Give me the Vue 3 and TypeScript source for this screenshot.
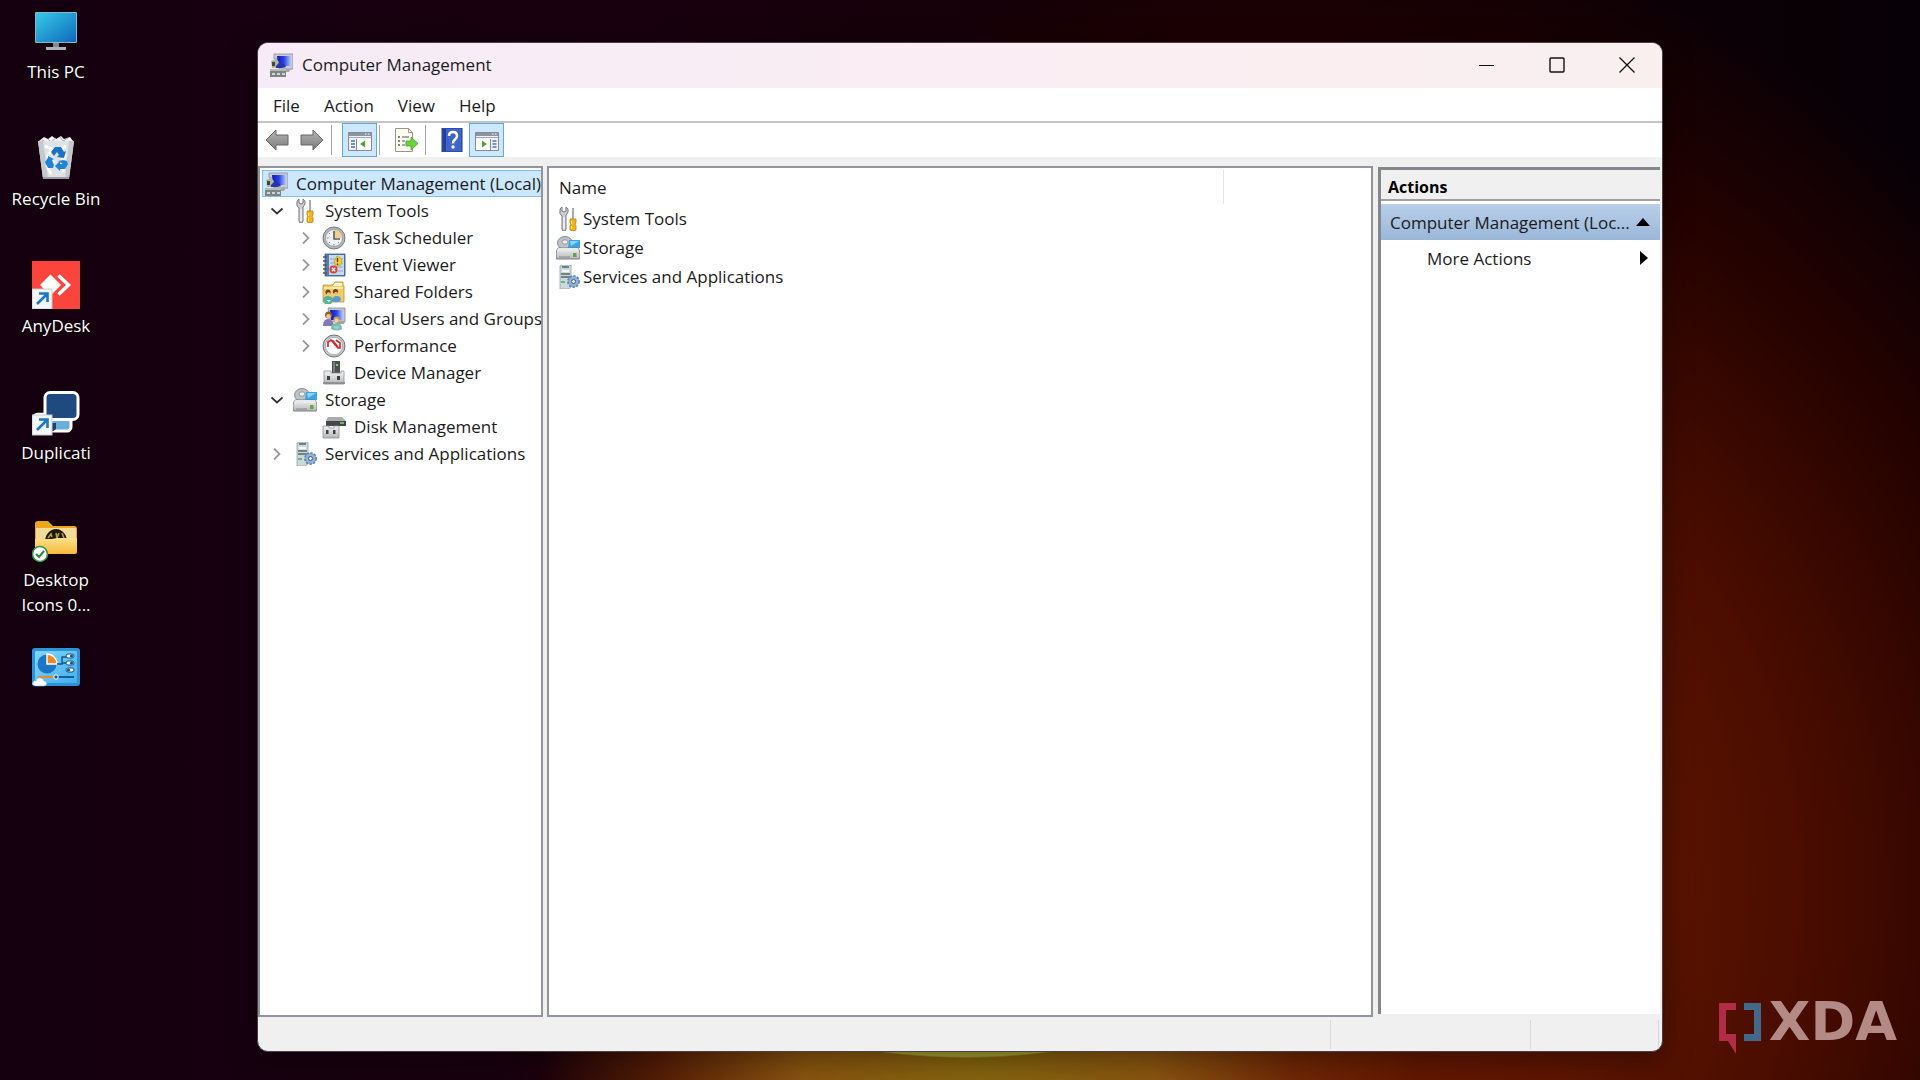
<script setup lang="ts">
import { ref } from 'vue'

interface TreeRow {
  label: string
  icon: string
  level: number
  state?: 'open' | 'closed'
}

const desktopItems = [
  { label: 'This PC', icon: 'pc' },
  { label: 'Recycle Bin', icon: 'bin' },
  { label: 'AnyDesk', icon: 'anydesk' },
  { label: 'Duplicati', icon: 'duplicati' },
  { label: 'Desktop Icons 0...', icon: 'folder' },
  { label: '', icon: 'control' },
]

const menus = ['File', 'Action', 'View', 'Help']

const tree: TreeRow[] = [
  { label: 'Computer Management (Local)', icon: 'computer', level: 0 },
  { label: 'System Tools', icon: 'tools', level: 1, state: 'open' },
  { label: 'Task Scheduler', icon: 'clock', level: 2, state: 'closed' },
  { label: 'Event Viewer', icon: 'event', level: 2, state: 'closed' },
  { label: 'Shared Folders', icon: 'shared', level: 2, state: 'closed' },
  { label: 'Local Users and Groups', icon: 'users', level: 2, state: 'closed' },
  { label: 'Performance', icon: 'perf', level: 2, state: 'closed' },
  { label: 'Device Manager', icon: 'device', level: 2 },
  { label: 'Storage', icon: 'storage', level: 1, state: 'open' },
  { label: 'Disk Management', icon: 'disk', level: 2 },
  { label: 'Services and Applications', icon: 'services', level: 1, state: 'closed' },
]

const listRows = [
  { label: 'System Tools', icon: 'tools' },
  { label: 'Storage', icon: 'storage' },
  { label: 'Services and Applications', icon: 'services' },
]

const selected = ref(0)
</script>

<template>
  <div class="desktop">
    <svg class="sprite" aria-hidden="true">
      <defs>
        <linearGradient id="g-screen" x1="0" y1="0" x2="1" y2="1">
          <stop offset="0" stop-color="#35cbe6" /><stop offset="1" stop-color="#0f68bd" />
        </linearGradient>
        <linearGradient id="g-blue" x1="0" y1="0" x2="1" y2="0">
          <stop offset="0" stop-color="#1018b0" /><stop offset=".5" stop-color="#2a45e0" /><stop offset="1" stop-color="#b7c8ff" />
        </linearGradient>
        <linearGradient id="g-folder" x1="0" y1="0" x2="0" y2="1">
          <stop offset="0" stop-color="#ffe08a" /><stop offset="1" stop-color="#f6b93c" />
        </linearGradient>
        <linearGradient id="g-panel" x1="0" y1="0" x2="1" y2="1">
          <stop offset="0" stop-color="#7fd6fb" /><stop offset="1" stop-color="#49aeea" />
        </linearGradient>
        <linearGradient id="g-arrow" x1="0" y1="0" x2="0" y2="1">
          <stop offset="0" stop-color="#b5b5b5" /><stop offset="1" stop-color="#7c7c7c" />
        </linearGradient>
        <linearGradient id="g-metal" x1="0" y1="0" x2="0" y2="1">
          <stop offset="0" stop-color="#f4f4f4" /><stop offset="1" stop-color="#b4b6b8" />
        </linearGradient>
      </defs>

      <symbol id="i-pc" viewBox="0 0 48 48">
        <rect x="3" y="5" width="42" height="31" rx="1" fill="#8fb4c6" />
        <rect x="4" y="6" width="40" height="29" fill="url(#g-screen)" />
        <path d="M21 36h6v4h-6z" fill="#7f8b93" />
        <path d="M14 40h20v3H14z" fill="#a9b3b9" />
      </symbol>
      <symbol id="i-bin" viewBox="0 0 48 48">
        <path d="M7 7l5-4 4 2 4-3 4 3 5-3 3 3 6-2 3 4-2 6H9z" fill="#f1f1f1" />
        <path d="M16 5l3 3 5-4M28 3l3 4 5-3M10 6l4 2" fill="none" stroke="#a5a8aa" stroke-width="1" />
        <path d="M6 7l36 0-5 38H11z" fill="#dfe3e6" />
        <path d="M6 7h5l5 37h-5zM42 7h-5l-4 37h4z" fill="#c4c9cd" />
        <path d="M13 12l7 3-4 7 5 6-6 4 4 8M34 12l-6 4 5 6-5 8 4 8" fill="none" stroke="#f9fafb" stroke-width="3" />
        <path d="M11 43h26v2H11z" fill="#999fa4" />
        <path d="M19 18l4-5h6l3 5 2-1-2 7-7-1 2-2-2-3-3 4z" fill="#1673c5" />
        <path d="M16 22l6 3-2 1 2 5-1 3h-5l-3-6 3-4zM26 27l5-1 4 1 1 3-3 5h-5v2l-5-5 5-5v3h3z" fill="#1f83d8" />
      </symbol>
      <symbol id="i-anydesk" viewBox="0 0 48 48">
        <rect width="48" height="48" fill="#fb443b" />
        <path d="M8 24l10.500-10.500L29 24 18.500 34.500z" fill="#fff" />
        <path d="M26.500 14.500L36.500 24l-10 9.500" fill="none" stroke="#fff" stroke-width="3.500" />
        <rect x="0" y="28" width="20" height="20" fill="#f4f6f8" stroke="#c7cbd0" />
        <path d="M5 43L15 33M7 32.500h8.500V41" fill="none" stroke="#1a78c8" stroke-width="2.600" />
      </symbol>
      <symbol id="i-duplicati" viewBox="0 -3 48 48">
        <rect x="1.500" y="23" width="22" height="17" rx="4" fill="#1f3f66" stroke="#fff" stroke-width="2.500" />
        <rect x="18" y="22" width="21" height="18" rx="4" fill="#6aaedb" stroke="#fff" stroke-width="3" />
        <rect x="13" y="1.500" width="33" height="27" rx="5" fill="#1f4a80" stroke="#fff" stroke-width="3" />
        <path d="M18 32h6v6q-3 3-6 3z" fill="#1f3f66" />
        <rect x="0" y="24" width="20" height="20" fill="#f4f6f8" stroke="#c7cbd0" />
        <path d="M5 39L15 29M7 28.500h8.500V37" fill="none" stroke="#1a78c8" stroke-width="2.600" />
      </symbol>
      <symbol id="i-folder" viewBox="0 0 48 48">
        <path d="M3 9q0-3 3-3h10l5 5h21q3 0 3 3v20H3z" fill="#eda51d" />
        <path d="M4 13h40v18H4z" fill="#f3dc9a" />
        <path d="M13 27a11 13 0 0 1 22 0z" fill="#1c1a0d" />
        <path d="M16 23l3-4 1 3M24 18l1 5 2-5M30 18l2 5" fill="none" stroke="#b79c3a" stroke-width="1.600" />
        <path d="M3 24h17l5-1h20v14q0 2-2 2H5q-2 0-2-2z" fill="url(#g-folder)" />
        <circle cx="8" cy="39" r="7.500" fill="#fff" stroke="#33964b" stroke-width="1.600" />
        <path d="M4 39l3 3 5-6" fill="none" stroke="#26873e" stroke-width="2" />
      </symbol>
      <symbol id="i-control" viewBox="0 -1 48 48">
        <rect x="0" y="5" width="48" height="38" rx="3" fill="#2c93d8" />
        <rect x="3" y="8" width="42" height="32" rx="1" fill="url(#g-panel)" />
        <circle cx="15" cy="21" r="9.500" fill="#1d76c5" />
        <path d="M15 21V11a10 10 0 0 1 10 10z" fill="#e98a24" stroke="#fff" stroke-width="1.400" />
        <path d="M25 21h5v-7h5M30 20h4" fill="none" stroke="#0f548f" stroke-width="1.400" />
        <rect x="34" y="11" width="8" height="4" rx="2" fill="#fff" stroke="#0f548f" />
        <rect x="34" y="18" width="8" height="4" rx="2" fill="#fff" stroke="#0f548f" />
        <rect x="34" y="25" width="8" height="4" rx="2" fill="#fff" stroke="#0f548f" />
        <circle cx="39.500" cy="13" r="1.600" fill="#0f548f" /><circle cx="39.500" cy="20" r="1.600" fill="#0f548f" /><circle cx="36.500" cy="27" r="1.600" fill="#0f548f" />
        <path d="M6 34h16" stroke="#e98a24" stroke-width="2" /><path d="M26 34h16" stroke="#0f5fa6" stroke-width="2" />
        <circle cx="24" cy="34" r="2.200" fill="#0f5fa6" stroke="#fff" />
        <path d="M3 43q-4-1-2-4 1-2 3-1 1-4 5-3 3 1 3 3 3 0 3 3-1 2-3 2z" fill="#fff" stroke="#5bb1e6" stroke-width=".6" />
      </symbol>

      <symbol id="i-computer" viewBox="0 0 24 24">
        <path d="M5 1h19v15H10V6H5z" fill="#c9ccd2" stroke="#8b9096" stroke-width=".8" />
        <path d="M8 3h14v10H9z" fill="url(#g-blue)" />
        <path d="M2 8l5-2 3 3-1 6H3z" fill="#aeb3a2" />
        <path d="M3 9h3v4H3z" fill="#3c4a34" />
        <path d="M7 13l3-3 5 1 2 3-4 1H7z" fill="#2534a8" />
        <path d="M13 16h9l-2 3h-6z" fill="#a5a8aa" />
        <path d="M1 16h16v8H1z" fill="#7d8484" />
        <path d="M1 16h16v2H1z" fill="#b4baba" />
        <path d="M3 20h3v2H3zM8 20h3v2H8zM13 20h3v2h-3z" fill="#cfd4d4" />
      </symbol>
      <symbol id="i-tools" viewBox="0 0 24 24">
        <path d="M4 3q0-2 2-3v4l2 1 2-1V0q3 2 2 5-1 2-2 3v14q0 2-2 2t-2-2V9Q3 7 4 3z" fill="#cdd0d2" stroke="#74787b" />
        <path d="M8 10v12" stroke="#f6f6f6" stroke-width="1.500" />
        <path d="M16 1h2v12h-2z" fill="#a8abad" />
        <path d="M14 12h6v4l-1 1 1 2v4q-3 2-6 0v-4l1-2-1-1z" fill="#f3b61b" stroke="#b9800d" stroke-width=".8" />
        <path d="M15.500 14v3M15.500 19v3" stroke="#ffe184" />
      </symbol>
      <symbol id="i-clock" viewBox="0 0 24 24">
        <circle cx="12" cy="12" r="11" fill="#b4b8bb" stroke="#75797c" />
        <circle cx="12" cy="12" r="8.500" fill="#edf3f8" stroke="#8e9499" stroke-width=".8" />
        <path d="M12 12V4a8 8 0 0 1 8 8z" fill="#f2cf91" />
        <path d="M12 5v8h6" fill="none" stroke="#5c6062" stroke-width="1.600" />
        <path d="M12 18v1.500M5 12h1.500M7 7l1 1M7 17l1-1M17 17l-1-1" stroke="#7f888f" />
      </symbol>
      <symbol id="i-event" viewBox="0 0 24 24">
        <path d="M3 1h20v22H3z" fill="#557db0" stroke="#31588c" stroke-width=".8" />
        <path d="M7 2h15v20H7z" fill="#c8d9ec" />
        <path d="M8 6h13M8 10h13M8 14h13M8 18h13" stroke="#8eabc9" />
        <path d="M1 4h4M1 8h4M1 12h4M1 16h4M1 20h4" stroke="#50575d" stroke-width="1.400" />
        <path d="M15 3l5 3-1 6-5 1-2-4z" fill="#f3cf33" stroke="#b59412" stroke-width=".6" />
        <path d="M15.500 5v4M15.500 10.500v1.500" stroke="#574404" stroke-width="1.400" />
        <circle cx="11.500" cy="16.500" r="4" fill="#df3d3b" />
        <path d="M9.800 14.800l3.400 3.400M13.200 14.800l-3.400 3.400" stroke="#fff" stroke-width="1.300" />
      </symbol>
      <symbol id="i-shared" viewBox="0 0 24 24">
        <path d="M1 5h10l2-3h8v4h1v16H1z" fill="#f1cd67" stroke="#bb922d" stroke-width=".8" />
        <path d="M13 3h7v3h-9z" fill="#fff5cd" />
        <path d="M2 8h19" stroke="#fbe7a6" stroke-width="2" />
        <circle cx="6" cy="12" r="2.600" fill="#704217" /><circle cx="13.500" cy="11.500" r="2.600" fill="#704217" />
        <circle cx="6.500" cy="14" r="1.800" fill="#edbd92" /><circle cx="14" cy="13.500" r="1.800" fill="#edbd92" />
        <path d="M1 21q0-5 5-5t5 5l-2 3H3z" fill="#53b39c" /><path d="M10 20q1-4 5-4t4 4l-2 2h-6z" fill="#5c9ad0" />
        <path d="M4 20h5l-2 2z" fill="#fff" />
      </symbol>
      <symbol id="i-users" viewBox="0 0 24 24">
        <path d="M6 1h17v14H8z" fill="#c1c6cd" stroke="#858b93" stroke-width=".8" />
        <path d="M8 3h13v10H9z" fill="url(#g-blue)" />
        <path d="M15 14h8l-1 3h-8z" fill="#9fa4a8" />
        <circle cx="6.500" cy="8" r="3.500" fill="#86602e" /><circle cx="6.500" cy="9.500" r="2.400" fill="#eec28e" />
        <path d="M1 19q0-7 5-7t6 7z" fill="#8178b8" />
        <circle cx="14.500" cy="12.500" r="3" fill="#c9a04e" /><circle cx="14.500" cy="13.500" r="2" fill="#f5d0a2" />
        <path d="M9 22q0-6 5.500-6t5.500 6q-5 3-11 0z" fill="#78bda6" />
        <path d="M11 20q3-2 7 0l-3 3z" fill="#9bc8ed" />
      </symbol>
      <symbol id="i-perf" viewBox="0 0 24 24">
        <circle cx="12" cy="12" r="11" fill="#c3c6c8" stroke="#707477" />
        <circle cx="12" cy="12" r="8.700" fill="#fff" stroke="#9b9fa2" stroke-width=".8" />
        <path d="M6 13V8l3-2 7 8h2V9l-4-3M8 6l3 1 5 6" fill="none" stroke="#d42529" stroke-width="1.700" />
      </symbol>
      <symbol id="i-device" viewBox="0 0 24 24">
        <path d="M10 0h8v12h-8z" fill="#4b5052" /><path d="M11 1h2v10h-2z" fill="#777d80" />
        <path d="M14 3h2v2h-2z" fill="#86d44c" />
        <path d="M2 10h7v2h10v-2h3v13H2z" fill="url(#g-metal)" stroke="#8d9194" stroke-width=".8" />
        <path d="M5 15h3v4H5zM15 15h3v4h-3z" fill="#3d4142" />
        <path d="M1 22h22" stroke="#808487" stroke-width="1.400" />
      </symbol>
      <symbol id="i-storage" viewBox="0 0 24 24">
        <ellipse cx="9" cy="7" rx="7.500" ry="6.500" fill="#bdc3c7" stroke="#7b8185" stroke-width=".9" />
        <ellipse cx="9" cy="6" rx="3" ry="2.200" fill="#edf0f1" stroke="#80868a" stroke-width=".8" />
        <path d="M13 4h11v8H12z" fill="#3aa5e3" /><path d="M14 5h9l-8 5z" fill="#89d3f6" />
        <path d="M2 12h20l2 4v6q0 1-1 1H1q-1 0-1-1v-6z" fill="url(#g-metal)" stroke="#6d7275" stroke-width=".9" />
        <path d="M2 12h20l1 3H1z" fill="#e8eaeb" />
        <path d="M17 17h3.500v4H17z" fill="#62a747" />
        <path d="M3 21h11" stroke="#868b8e" />
      </symbol>
      <symbol id="i-disk" viewBox="0 0 24 24">
        <path d="M6 2h14l4 4v4H4V6z" fill="#a8adb0" />
        <path d="M4 6h20v5H4z" fill="#45494b" /><path d="M18 7h4v2h-4z" fill="#67bd4d" />
        <path d="M1 11h6v2h5v-2h5v12H1z" fill="url(#g-metal)" stroke="#8d9194" stroke-width=".8" />
        <path d="M4 15h2.500v4H4zM11 15h2.500v4H11z" fill="#3d4142" />
      </symbol>
      <symbol id="i-services" viewBox="0 0 24 24">
        <path d="M4 1l3-1h8v21l-2 3H4z" fill="#ccd9dd" stroke="#92a3a9" stroke-width=".8" />
        <path d="M6 2h7M5 9h9M5 12h9" stroke="#53646a" stroke-width="1.600" />
        <path d="M6 5h7v2H6z" fill="#f3f8f9" /><path d="M5 16h4v2H5z" fill="#6fb27c" />
        <circle cx="17.500" cy="16.500" r="5.500" fill="#86a9cc" stroke="#5e86b2" stroke-width="2" stroke-dasharray="2.200 1.400" />
        <circle cx="17.500" cy="16.500" r="4.800" fill="#8fb2d6" /><circle cx="17.500" cy="16.500" r="2" fill="#f2f6fa" stroke="#3a5c8c" />
      </symbol>

      <symbol id="i-back" viewBox="0 0 24 24">
        <path d="M1 12L11 2v5h12v10H11v5z" fill="url(#g-arrow)" stroke="#666" stroke-linejoin="round" />
      </symbol>
      <symbol id="i-forward" viewBox="0 0 24 24">
        <path d="M23 12L13 2v5H1v10h12v5z" fill="url(#g-arrow)" stroke="#666" stroke-linejoin="round" />
      </symbol>
      <symbol id="i-treepane" viewBox="0 0 24 24">
        <path d="M.5 4.500h23v18H.5z" fill="#f1f2f4" stroke="#858b93" />
        <path d="M1 5h22v3H1z" fill="#8b95a1" /><path d="M17 6h1.500M20 6h1.500" stroke="#fff" />
        <path d="M1 9.500h22" stroke="#a3abb4" /><path d="M8.500 11v11.500" stroke="#858b93" />
        <path d="M3 13h4M3 16h4M3 19h4" stroke="#4877b4" stroke-width="1.400" />
        <path d="M9 11h14v11H9z" fill="#fff" /><path d="M17 12.500v7L12 16z" fill="#4da327" />
      </symbol>
      <symbol id="i-actionpane" viewBox="0 0 24 24">
        <path d="M.5 4.500h23v18H.5z" fill="#f1f2f4" stroke="#858b93" />
        <path d="M1 5h22v3H1z" fill="#8b95a1" /><path d="M17 6h1.500M20 6h1.500" stroke="#fff" />
        <path d="M1 9.500h22" stroke="#a3abb4" /><path d="M15.500 11v11.500" stroke="#858b93" />
        <path d="M17.500 13h4M17.500 16h4M17.500 19h4" stroke="#4877b4" stroke-width="1.400" />
        <path d="M1 11h14v11H1z" fill="#fff" /><path d="M7 12.500v7l5-3.500z" fill="#4da327" />
      </symbol>
      <symbol id="i-export" viewBox="0 0 24 24">
        <path d="M1.500.5h13l4 4v19h-17z" fill="#fdfbef" stroke="#99958a" />
        <path d="M14.500.5v4h4" fill="none" stroke="#99958a" />
        <path d="M4 9h2M4 13h2M4 17h2" stroke="#5a5a5a" stroke-width="1.600" /><path d="M8 9h7M8 13h3M8 17h3" stroke="#8b8b95" stroke-width="1.400" />
        <path d="M12 13h5V9l7 6.500-7 6.500v-4h-5z" fill="#6bd13c" stroke="#3fa41d" stroke-width=".8" />
      </symbol>
      <symbol id="i-help" viewBox="0 0 24 24">
        <path d="M2 0h20v24H2z" fill="#3f63c8" stroke="#1f388b" /><path d="M3 1h3v22H3z" fill="#223f9c" />
        <path d="M9 8q0-4 4-4t4 4q0 2-2 3.500-2 1.500-2 4" fill="none" stroke="#fff" stroke-width="2.500" />
        <circle cx="13" cy="19" r="1.700" fill="#fff" />
      </symbol>
    </svg>

    <nav class="shortcuts" aria-label="Desktop">
      <button v-for="item in desktopItems" :key="item.icon" class="shortcut" type="button" :aria-label="item.label || 'Control Panel'">
        <svg class="shortcut-icon"><use :href="`#i-${item.icon}`" /></svg>
        <span>{{ item.label }}</span>
      </button>
    </nav>

    <main class="window">
      <header class="titlebar">
        <svg class="icon"><use href="#i-computer" /></svg>
        <h1>Computer Management</h1>
        <div class="controls">
          <button type="button" aria-label="Minimize">
            <svg width="16" height="16" viewBox="0 0 16 16"><path d="M0 8.500h15" stroke="#111" /></svg>
          </button>
          <button type="button" aria-label="Maximize">
            <svg width="16" height="16" viewBox="0 0 16 16"><rect x="1" y="1" width="14" height="14" rx="1" fill="none" stroke="#111" stroke-width="1.400" /></svg>
          </button>
          <button type="button" aria-label="Close">
            <svg width="16" height="16" viewBox="0 0 16 16"><path d="M.5.5l15 15M15.500.5l-15 15" stroke="#111" stroke-width="1.300" /></svg>
          </button>
        </div>
      </header>

      <nav class="menubar" aria-label="Menu">
        <button v-for="menu in menus" :key="menu" type="button">{{ menu }}</button>
      </nav>

      <div class="toolbar" role="toolbar">
        <button type="button" class="tool" aria-label="Back"><svg class="icon"><use href="#i-back" /></svg></button>
        <button type="button" class="tool" aria-label="Forward"><svg class="icon"><use href="#i-forward" /></svg></button>
        <i class="sep"></i>
        <button type="button" class="tool on first" aria-label="Show console tree"><svg class="icon"><use href="#i-treepane" /></svg></button>
        <i class="sep"></i>
        <button type="button" class="tool spaced" aria-label="Export list"><svg class="icon"><use href="#i-export" /></svg></button>
        <i class="sep"></i>
        <button type="button" class="tool spaced" aria-label="Help topics"><svg class="icon"><use href="#i-help" /></svg></button>
        <button type="button" class="tool on" aria-label="Show action pane"><svg class="icon"><use href="#i-actionpane" /></svg></button>
      </div>

      <div class="panes">
        <section class="pane tree">
          <ul role="tree">
            <li v-for="(row, index) in tree" :key="row.label" role="treeitem" :aria-selected="selected === index">
              <button type="button" :class="['tree-row', `level-${row.level}`, { selected: selected === index }]" @click="selected = index">
                <span v-if="row.level" class="twisty">
                  <svg v-if="row.state === 'open'" width="12" height="12" viewBox="0 0 12 12"><path d="M.5 3.500L6 8.500l5.500-5" fill="none" stroke="#333" stroke-width="1.800" /></svg>
                  <svg v-if="row.state === 'closed'" width="12" height="12" viewBox="0 0 12 12"><path d="M3 .5L8.500 6 3 11.500" fill="none" stroke="#999" stroke-width="1.800" /></svg>
                </span>
                <svg class="icon"><use :href="`#i-${row.icon}`" /></svg>
                <span class="tree-label">{{ row.label }}</span>
              </button>
            </li>
          </ul>
        </section>

        <section class="pane content">
          <table>
            <thead>
              <tr><th scope="col">Name</th><td></td></tr>
            </thead>
            <tbody>
              <tr v-for="row in listRows" :key="row.label">
                <td colspan="2">
                  <div class="cell"><svg class="icon"><use :href="`#i-${row.icon}`" /></svg>{{ row.label }}</div>
                </td>
              </tr>
            </tbody>
          </table>
        </section>

        <aside class="actions">
          <h2>Actions</h2>
          <button type="button" class="group">
            <span>Computer Management (Loc...</span>
            <svg width="14" height="8" viewBox="0 0 14 8"><path d="M0 8l7-8 7 8z" /></svg>
          </button>
          <button type="button" class="more">
            <span>More Actions</span>
            <svg width="8" height="14" viewBox="0 0 8 14"><path d="M0 0l8 7-8 7z" /></svg>
          </button>
        </aside>
      </div>

      <footer class="statusbar"><span></span><span></span><span></span></footer>
    </main>

    <div class="brand">
      <svg width="42" height="52" viewBox="0 0 42 52" aria-hidden="true">
        <path d="M0 0h17v7H7v24h10v20L9 38H0z" fill="#b02c47" />
        <path d="M25 0h17v38H25v-7h10V7H25z" fill="#42688a" />
      </svg>
      <span>XDA</span>
    </div>
  </div>
</template>

<style>
body {
  margin: 0;
}
</style>

<style scoped>
.desktop {
  position: relative;
  min-height: 100vh;
  overflow: hidden;
  box-sizing: border-box;
  font-family: "Open Sans", "Noto Sans", sans-serif;
  font-size: 17px;
  color: #1b1b1b;
  background:
    radial-gradient(320px 154px at calc(50% + 6px) calc(100% - 176px), #a8a336 99%, transparent 100%),
    radial-gradient(440px 420px at 51% 100%, #86660f 0%, #8a5510 40%, rgba(120, 50, 8, 0.6) 72%, transparent 100%),
    radial-gradient(860px 960px at 70% 82%, #6e1c00 0%, #5c1400 35%, #470c00 56%, #240200 80%, transparent 100%),
    linear-gradient(90deg, #150010 0%, #19000f 30%, #140006 60%, #070006 100%);
}
.desktop button {
  margin: 0;
  padding: 0;
  border: 0;
  background: none;
  font: inherit;
  color: inherit;
}
.sprite {
  position: absolute;
  width: 0;
  height: 0;
}
.icon {
  display: block;
  flex: none;
  width: 24px;
  height: 24px;
}

/* Desktop shortcuts */
.shortcuts {
  display: flex;
  flex-direction: column;
  width: 112px;
  padding-top: 7px;
}
.desktop .shortcut {
  display: flex;
  flex-direction: column;
  align-items: center;
  gap: 4px;
  height: 127px;
  padding: 0 16px;
  color: #fff;
  line-height: 25px;
  text-shadow: 0 1px 2px #000;
}
.shortcut span {
  width: 96px;
}
.shortcut-icon {
  flex: none;
  width: 48px;
  height: 48px;
}

/* Window frame */
.window {
  position: absolute;
  inset: 42px 257px 28px;
  display: flex;
  flex-direction: column;
  box-sizing: border-box;
  overflow: hidden;
  border: 1px solid #4a4046;
  border-radius: 11px;
  background: #f0f0f0;
  box-shadow: 0 8px 30px rgba(0, 0, 0, 0.4);
}
.titlebar {
  display: flex;
  align-items: center;
  box-sizing: border-box;
  height: 45px;
  padding: 0 0 2px 11px;
  background: linear-gradient(90deg, #f6ebf6, #fbeef3 60%, #f9efef);
}
h1 {
  margin: 0 auto 0 9px;
  font-size: 17px;
  font-weight: 400;
}
.controls {
  display: flex;
  align-self: stretch;
}
.controls button {
  display: flex;
  align-items: center;
  justify-content: center;
  width: 70px;
}
.menubar {
  display: flex;
  box-sizing: border-box;
  height: 35px;
  padding: 2px 0 0 3px;
  background: #fff;
  border-bottom: 2px solid #c4c4c4;
}
.menubar button {
  padding: 0 12px;
}
.toolbar {
  display: flex;
  align-items: center;
  height: 34px;
  padding-left: 1px;
  background: #fff;
}
.desktop .tool {
  display: flex;
  align-items: center;
  justify-content: center;
  box-sizing: border-box;
  width: 35px;
  height: 34px;
}
.desktop .tool.on {
  border: 1px solid #62a9de;
  background: #cce8ff;
}
.desktop .tool.first {
  margin-left: 10px;
}
.desktop .spaced {
  margin-left: 8px;
}
.sep {
  width: 1px;
  height: 30px;
  margin-left: 2px;
  background: #a8a8a8;
}

/* Panes */
.panes {
  display: flex;
  flex: 1;
  min-height: 0;
  padding-top: 9px;
}
.pane {
  box-sizing: border-box;
  border: 2px solid #92959b;
  background: #fff;
}
.tree {
  flex: none;
  width: 285px;
  margin-right: 4px;
  padding: 2px 0 0 2px;
  overflow: hidden;
}
.tree ul {
  margin: 0;
  padding: 0;
  list-style: none;
}
.desktop .tree-row {
  display: flex;
  align-items: center;
  box-sizing: border-box;
  width: 100%;
  height: 27px;
  border: 1px solid transparent;
  border-right: 0;
  line-height: 25px;
  white-space: nowrap;
}
.desktop .tree-row.selected {
  border-color: #7fc0f0;
  background: #cce8ff;
}
.desktop .level-0 {
  padding-left: 1px;
}
.desktop .level-1 {
  padding-left: 8px;
}
.desktop .level-2 {
  padding-left: 37px;
}
.twisty {
  flex: none;
  width: 22px;
  height: 12px;
  line-height: 0;
  text-align: left;
}
.tree-label {
  margin-left: 8px;
}
.content {
  flex: 1;
  margin-right: 5px;
  padding: 2px 0 0;
}
table {
  width: 100%;
  border-collapse: collapse;
  table-layout: fixed;
}
th {
  box-sizing: border-box;
  width: 82%;
  height: 34px;
  padding: 0 0 0 10px;
  border-right: 1px solid #e5e5e5;
  font-weight: 400;
  text-align: left;
}
td {
  padding: 0;
}
.cell {
  display: flex;
  align-items: center;
  gap: 3px;
  height: 29px;
  padding-left: 7px;
}
.actions {
  flex: none;
  box-sizing: border-box;
  width: 282px;
  margin: 1px 2px 3px 0;
  border-top: 3px solid #85878b;
  border-left: 3px solid #85878b;
  background: #fff;
}
h2 {
  height: 29px;
  margin: 0 0 3px;
  padding-left: 7px;
  border-bottom: 2px solid #a0a0a0;
  background: #f0f0f0;
  color: #000;
  font-size: 16px;
  font-weight: 700;
  line-height: 34px;
}
.actions button {
  display: flex;
  align-items: center;
  justify-content: space-between;
  box-sizing: border-box;
  width: 100%;
  height: 36px;
}
.desktop .group {
  padding: 0 10px 0 9px;
  background: linear-gradient(#b9cfe9, #9ab7d9);
}
.desktop .more {
  padding: 0 12px 0 46px;
}

.statusbar {
  display: grid;
  grid-template-columns: 1fr 200px 128px;
  height: 34px;
  padding: 3px 3px 2px 0;
  box-sizing: border-box;
}
.statusbar span {
  border-right: 1px solid #d9d9d9;
}

/* Wallpaper mark */
.brand {
  position: absolute;
  right: 23px;
  bottom: 25px;
  display: flex;
  gap: 8px;
  color: #b38a85;
}
.brand span {
  height: 38px;
  font-family: "DejaVu Sans", sans-serif;
  font-size: 54px;
  font-weight: 700;
  line-height: 38px;
}
</style>
